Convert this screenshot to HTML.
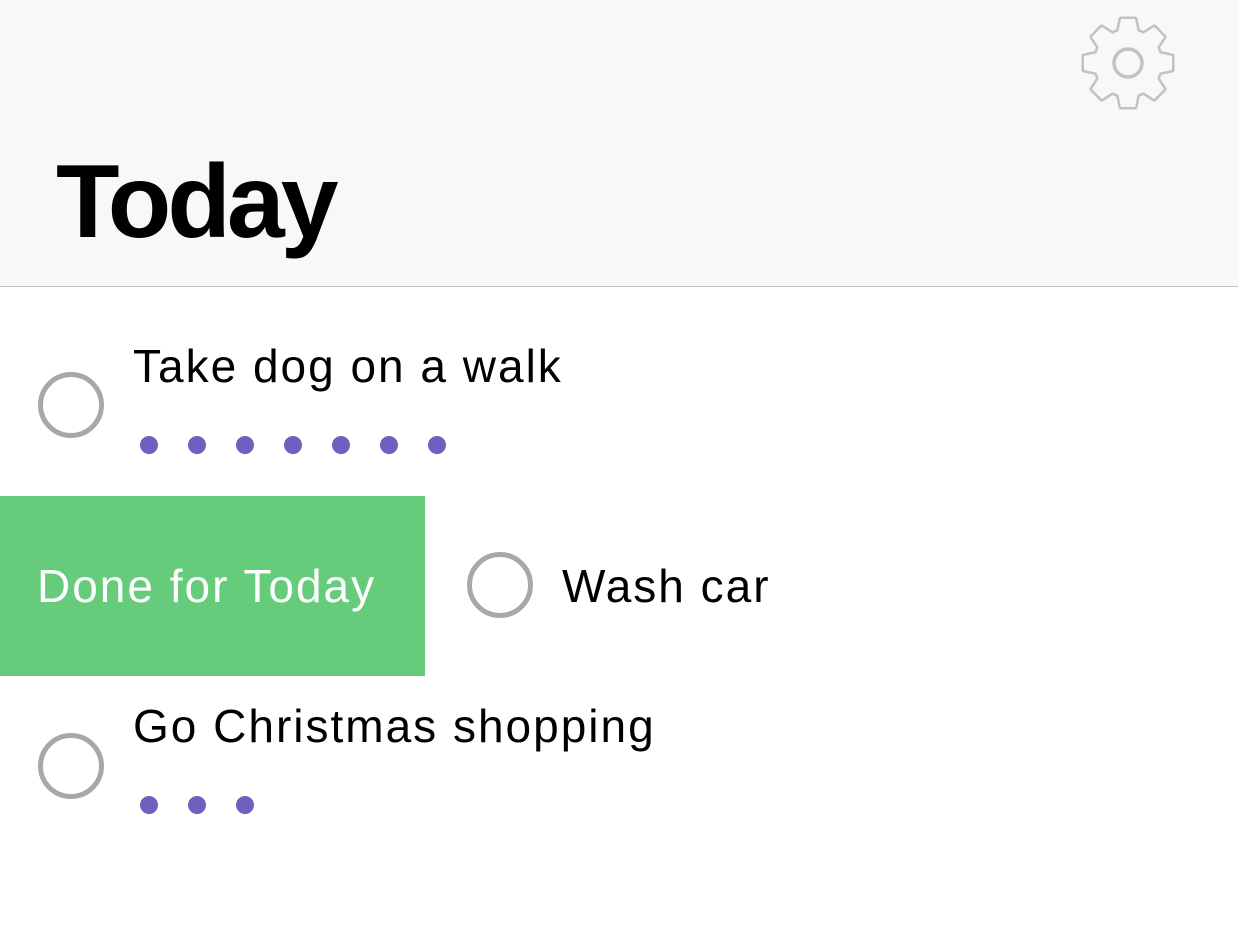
<!DOCTYPE html>
<html><head><style>
body{margin:0;width:1238px;height:949px;background:#fff;position:relative;overflow:hidden;font-family:"Liberation Sans",sans-serif}
.hdr{position:absolute;left:0;top:0;width:1238px;height:286px;background:#f8f8f8;border-bottom:1px solid #c4c4c4}
.t{position:absolute;white-space:nowrap;line-height:1;letter-spacing:2px}
.c{position:absolute;width:56px;height:56px;border:5px solid #a8a8a8;border-radius:50%;box-sizing:content-box}
.d{position:absolute;width:18px;height:18px;border-radius:50%;background:#6f5fbf}
</style></head><body>
<div class="hdr"></div>
<svg style="position:absolute;left:1078px;top:13px" width="100" height="100" viewBox="-50 -50 100 100">
<g stroke="#c0c2c5" stroke-width="5" stroke-linejoin="round" fill="#f8f8f8">
<circle r="33"/>
<g id="teeth"><polygon points="-10,-30 -7,-44 7,-44 10,-30"/><polygon transform="rotate(45)" points="-10,-30 -7,-44 7,-44 10,-30"/><polygon transform="rotate(90)" points="-10,-30 -7,-44 7,-44 10,-30"/><polygon transform="rotate(135)" points="-10,-30 -7,-44 7,-44 10,-30"/><polygon transform="rotate(180)" points="-10,-30 -7,-44 7,-44 10,-30"/><polygon transform="rotate(225)" points="-10,-30 -7,-44 7,-44 10,-30"/><polygon transform="rotate(270)" points="-10,-30 -7,-44 7,-44 10,-30"/><polygon transform="rotate(315)" points="-10,-30 -7,-44 7,-44 10,-30"/></g>
</g>
<g fill="#f8f8f8" stroke="none"><circle r="33"/><use href="#teeth" stroke="none"/></g>
<circle r="14" fill="none" stroke="#c0c2c5" stroke-width="3.5"/>
</svg>
<div class="t" style="left:56px;top:150px;font-size:104px;font-weight:bold;color:#000;letter-spacing:-4px">Today</div>

<div class="c" style="left:38px;top:372px"></div>
<div class="t" style="left:133px;top:343px;font-size:46px">Take dog on a walk</div>
<div class="d" style="left:140px;top:436px"></div><div class="d" style="left:188px;top:436px"></div><div class="d" style="left:236px;top:436px"></div><div class="d" style="left:284px;top:436px"></div><div class="d" style="left:332px;top:436px"></div><div class="d" style="left:380px;top:436px"></div><div class="d" style="left:428px;top:436px"></div>

<div style="position:absolute;left:0;top:496px;width:425px;height:180px;background:#66cb7a"></div>
<div class="t" style="left:37px;top:563px;font-size:46px;color:#fff">Done for Today</div>
<div class="c" style="left:467px;top:552px"></div>
<div class="t" style="left:562px;top:563px;font-size:46px">Wash car</div>

<div class="c" style="left:38px;top:733px"></div>
<div class="t" style="left:133px;top:703px;font-size:46px">Go Christmas shopping</div>
<div class="d" style="left:140px;top:796px"></div><div class="d" style="left:188px;top:796px"></div><div class="d" style="left:236px;top:796px"></div>
</body></html>
